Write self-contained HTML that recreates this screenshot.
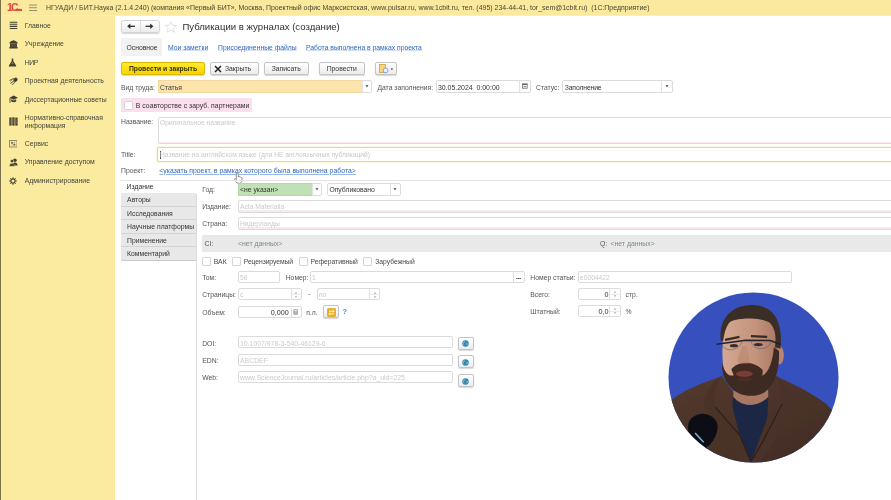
<!DOCTYPE html>
<html lang="ru">
<head>
<meta charset="utf-8">
<title>Публикации в журналах (создание)</title>
<style>
*{box-sizing:border-box;margin:0;padding:0}
html,body{width:891px;height:500px;overflow:hidden;background:#fff}
body{font-family:"Liberation Sans",sans-serif;font-size:7.5px;color:#333;position:relative}
.abs{position:absolute;white-space:nowrap}
#titlebar{left:0;top:0;width:891px;height:16px;background:#fbea9d;border-bottom:1.500px solid #fcf0ac}
#sidebar{left:0;top:16px;width:115px;height:484px;background:#fbeb9f}
#edge{left:0;top:0;width:1px;height:500px;background:#77724a}
.sb{left:24.700px;font-size:6.850px;color:#45443c;line-height:8.4px}
.t{font-size:6.800px;color:#4a4a4a;line-height:9px}
.lbl{font-size:6.800px;color:#555;line-height:9px}
.ph{font-size:6.700px;color:#cacaca;line-height:9px}
.link{font-size:6.8px;color:#2f66ba;line-height:9px;text-decoration:underline;text-decoration-color:#9ab6e4;text-decoration-thickness:0.700px;text-underline-offset:0.800px}
.fld{border:1px solid #dbdbdb;background:#fff;border-radius:2px}
.btn{border:1px solid #c4c4c4;border-radius:2px;background:linear-gradient(#fff,#ececec);font-size:6.8px;color:#333;text-align:center;line-height:12px;box-shadow:0 1px 1px rgba(0,0,0,.16)}
.cb{width:8.500px;height:8.400px;margin-left:-0.300px;border-radius:1.500px;border:1px solid #d6d6d6;background:#fff;border-radius:1px}
.ltab{left:121px;width:75.3px;height:13.5px;background:#e8e8e8;border-bottom:1px solid #d4d4d4;font-size:6.8px;color:#333;line-height:14.200px;padding-left:6.100px;overflow:hidden}
</style>
</head>
<body>
<div id="wrap" style="position:absolute;left:0;top:0;width:891px;height:500px;will-change:transform;overflow:hidden">
<div class="abs" id="titlebar"></div>
<div class="abs" id="sidebar"></div>
<div class="abs" id="edge"></div>

<!-- title bar content -->
<svg class="abs" style="left:7px;top:3px" width="16" height="10" viewBox="0 0 16 10">
  <text x="0" y="7.900" font-family="Liberation Sans, sans-serif" font-size="10.500" font-weight="bold" fill="#dc4a3c" letter-spacing="-1.800">1С</text>
  <rect x="8.600" y="5.900" width="6.400" height="2" fill="#dc4a3c"/>
</svg>
<svg class="abs" style="left:29px;top:4px" width="9" height="8" viewBox="0 0 9 8">
  <rect x="0" y="0.6" width="8" height="0.9" fill="#8a8670"/><rect x="0" y="3.3" width="8" height="0.9" fill="#8a8670"/><rect x="0" y="6" width="8" height="0.9" fill="#8a8670"/>
</svg>
<div class="abs" id="ttl" style="left:46px;top:3.3px;font-size:6.96px;color:#4a4634;line-height:9px">НГУАДИ / БИТ.Наука (2.1.4.240) (компания «Первый БИТ», Москва, Проектный офис Марксистская, www.pulsar.ru, www.1cbit.ru, тел. (495) 234-44-41, tor_sem@1cbit.ru)&nbsp; (1С:Предприятие)</div>

<!-- sidebar items -->
<div class="abs sb" style="top:21.5px">Главное</div>
<div class="abs sb" style="top:40.0px">Учреждение</div>
<div class="abs sb" style="top:58.5px;letter-spacing:-0.400px">НИР</div>
<div class="abs sb" style="top:77.0px">Проектная деятельность</div>
<div class="abs sb" style="top:95.5px">Диссертационные советы</div>
<div class="abs sb" style="top:113.7px">Нормативно-справочная<br>информация</div>
<div class="abs sb" style="top:139.9px">Сервис</div>
<div class="abs sb" style="top:158.4px">Управление доступом</div>
<div class="abs sb" style="top:177.1px">Администрирование</div>

<!-- MAIN -->

<!-- header -->
<div class="abs btn" style="left:121px;top:20.300px;width:39px;height:12.300px;border-color:#d2d2d2;border-radius:2.500px"></div>
<div class="abs" style="left:140px;top:21.300px;width:1px;height:10.300px;background:#dedede"></div>
<svg class="abs" style="left:121px;top:20.300px" width="39" height="12.300" viewBox="0 0 39 12.300">
  <path d="M8 6.300 H14" stroke="#2e2e2e" stroke-width="1.300" fill="none"/><path d="M6.200 6.300 L9.400 3.600 V9 Z" fill="#2e2e2e"/>
  <path d="M24.600 6.300 H30.600" stroke="#2e2e2e" stroke-width="1.300" fill="none"/><path d="M32.400 6.300 L29.200 3.600 V9 Z" fill="#2e2e2e"/>
</svg>
<svg class="abs" style="left:164.400px;top:19.800px" width="13.600" height="13.600" viewBox="0 0 24 24">
  <path d="M12 2.500 L14.900 9.200 L22 9.800 L16.600 14.600 L18.200 21.600 L12 17.900 L5.800 21.600 L7.400 14.600 L2 9.800 L9.100 9.200 Z" fill="#fff" stroke="#d8d8d8" stroke-width="1.300"/>
</svg>
<div class="abs" id="h1" style="left:182.400px;top:19.800px;font-size:9.6px;color:#2f2f2f;line-height:13px">Публикации в журналах (создание)</div>

<!-- tabs -->
<div class="abs" style="left:121px;top:38px;width:41px;height:18px;background:#f2f2f2;border-radius:1px"></div>
<div class="abs t" id="tab1" style="left:126.5px;top:43px;color:#333">Основное</div>
<div class="abs link" id="tab2" style="text-decoration-color:#d3dff3;text-underline-offset:0.200px;left:168px;top:43px">Мои заметки</div>
<div class="abs link" id="tab3" style="text-decoration-color:#d3dff3;text-underline-offset:0.200px;left:218px;top:43px">Присоединенные файлы</div>
<div class="abs link" id="tab4" style="text-decoration-color:#d3dff3;text-underline-offset:0.200px;left:306px;top:43px">Работа выполнена в рамках проекта</div>

<!-- command bar -->
<div class="abs btn" id="b1" style="left:121px;top:62px;width:84px;height:12.5px;background:linear-gradient(#ffea30,#f6d400);border-color:#dcb900;font-weight:bold;color:#3a3000">Провести и закрыть</div>
<div class="abs btn" id="b2" style="left:209.5px;top:62px;width:49.500px;height:12.500px;padding-left:7.500px">Закрыть</div>
<svg class="abs" style="left:214px;top:64.5px" width="8" height="8" viewBox="0 0 8 8"><path d="M1 1 L7 7 M7 1 L1 7" stroke="#222" stroke-width="1.5" fill="none"/></svg>
<div class="abs btn" id="b3" style="left:264px;top:62px;width:44.5px;height:12.5px">Записать</div>
<div class="abs btn" id="b4" style="left:319px;top:62px;width:45.5px;height:12.5px">Провести</div>
<div class="abs btn" id="b5" style="left:375px;top:62px;width:22px;height:12.5px"></div>
<svg class="abs" style="left:378.5px;top:63.5px" width="16" height="10" viewBox="0 0 16 10">
  <rect x="0.5" y="0.5" width="6" height="8" fill="#f7d77a" stroke="#c9a23a" stroke-width="0.8"/>
  <circle cx="6.6" cy="6.4" r="2.4" fill="#eef3fb" stroke="#6f8fc9" stroke-width="0.8"/>
  <path d="M11.6 4.6 h2.6 l-1.3 1.6z" fill="#444"/>
</svg>


<!-- row: Вид труда -->
<div class="abs lbl" id="l_vid" style="left:121px;top:82.6px">Вид труда:</div>
<div class="abs fld" style="left:158px;top:80.400px;width:213.500px;height:12.300px"></div>
<div class="abs" style="left:158px;top:80.400px;width:203.500px;height:12.300px;background:#fde4ad;border:1px solid #f3d9a0;border-right:none;border-radius:1px 0 0 1px"></div>
<div class="abs t" style="left:160px;top:82.6px;color:#3a3a3a">Статья</div>
<div class="abs" style="left:361.500px;top:81.400px;width:1px;height:10.300px;background:#e6e6e6"></div>
<svg class="abs" style="left:364.500px;top:85px" width="4" height="3" viewBox="0 0 4 3"><path d="M0.500 0.300h3L2 2.300z" fill="#3c3c3c"/></svg>
<div class="abs lbl" id="l_date" style="left:377.4px;top:82.6px">Дата заполнения:</div>
<div class="abs fld" style="left:436px;top:80.200px;width:94.800px;height:12.600px"></div>
<div class="abs t" id="v_date" style="left:437.900px;top:82.600px;color:#333;white-space:pre;font-size:6.950px">30.05.2024  0:00:00</div>
<div class="abs" style="left:519px;top:81.200px;width:1px;height:10.600px;background:#e2e2e2"></div>
<svg class="abs" style="left:522.200px;top:83.300px" width="5.600" height="5.600" viewBox="0 0 6 6"><rect x="0.400" y="0.900" width="5.200" height="4.700" fill="#fff" stroke="#6a6a6a" stroke-width="0.800"/><rect x="0.400" y="0.900" width="5.200" height="1.300" fill="#6a6a6a"/><rect x="1.500" y="3.100" width="3" height="1.500" fill="#9a9a9a"/></svg>
<div class="abs lbl" id="l_stat" style="left:536px;top:82.6px">Статус:</div>
<div class="abs fld" style="left:562px;top:80.200px;width:111px;height:12.600px"></div>
<div class="abs t" style="left:564.700px;top:82.600px;color:#333;letter-spacing:-0.120px">Заполнение</div>
<div class="abs" style="left:661.200px;top:81.200px;width:1px;height:10.600px;background:#e2e2e2"></div>
<svg class="abs" style="left:665.200px;top:84.700px" width="4" height="3" viewBox="0 0 4 3"><path d="M0.500 0.300h3L2 2.300z" fill="#3c3c3c"/></svg>

<!-- checkbox row -->
<div class="abs" style="left:121px;top:97.6px;width:130.7px;height:14.4px;background:#fbdfee"></div>
<div class="abs cb" style="left:124.3px;top:101.4px"></div>
<div class="abs t" id="c_co" style="left:135.8px;top:101px;color:#333;letter-spacing:0.045px">В соавторстве с заруб. партнерами</div>

<!-- Название -->
<div class="abs lbl" style="left:121px;top:117px">Название:</div>
<div class="abs fld" style="left:158px;top:117.100px;width:740px;height:27px"></div>
<div class="abs" style="left:159px;top:141.500px;width:732px;height:1.500px;background:#fce8eb"></div>
<div class="abs ph" id="p_name" style="left:160px;top:117.9px">Оригинальное название</div>

<!-- Title -->
<div class="abs lbl" style="left:121px;top:150.3px">Title:</div>
<div class="abs fld" style="left:157.300px;top:147.200px;width:740px;height:14.600px;border-color:#f4da62;box-shadow:0 0 0 0.600px #fbefba"></div>
<div class="abs" style="left:159.600px;top:150.600px;width:0.800px;height:8.400px;background:#555"></div>
<div class="abs ph" id="p_title" style="left:160px;top:150.3px">Название на английском языке (для НЕ англоязычных публикаций)</div>

<!-- Проект -->
<div class="abs lbl" style="left:121px;top:166px">Проект:</div>
<div class="abs link" id="p_proj" style="left:159.300px;top:165.700px;letter-spacing:0.050px;text-decoration-thickness:0.700px;text-underline-offset:0.700px">&lt;указать проект, в рамках которого была выполнена работа&gt;</div>
<svg class="abs" style="left:234px;top:172px" width="10" height="12" viewBox="0 0 10 12"><path d="M3.2 0.8c.6 0 1 .4 1 1v3.3l.3-.5c.5-.3 1-.1 1.200.3.500-.300 1-.100 1.200.400.500-.2.900 0 1.100.5v2.600c0 1.500-1 2.800-2.600 2.800h-1.200c-1 0-1.600-.5-2.200-1.300l-1.500-2.400c-.3-.5.300-1.100.9-.7l.9.900v-6.900c0-.6.400-1 .9-1z" fill="#fff" stroke="#666" stroke-width="0.7"/></svg>

<!-- left tabs -->
<div class="abs" style="left:121px;top:179.700px;width:770px;height:1px;background:#e4e4e4"></div>
<div class="abs" style="left:196px;top:180px;width:1px;height:320px;background:#dcdcdc"></div>
<div class="abs" style="left:120.500px;top:180px;width:1px;height:81px;background:#e0e0e0"></div>
<div class="abs ltab" style="top:180.500px;height:13px;background:#fff;border-bottom:none;line-height:12.600px;width:75.500px;padding-left:5.600px">Издание</div>
<div class="abs ltab" style="top:193.400px">Авторы</div>
<div class="abs ltab" style="top:206.900px">Исследования</div>
<div class="abs ltab" style="top:220.400px">Научные платформы</div>
<div class="abs ltab" style="top:233.800px">Применение</div>
<div class="abs ltab" style="top:247.200px;height:13.800px;border-radius:0 0 0 2px;border-bottom:1px solid #c9c9c9">Комментарий</div>

<!-- Год -->
<div class="abs lbl" style="left:202.2px;top:185.2px">Год:</div>
<div class="abs fld" style="left:238px;top:183.200px;width:83.800px;height:12.500px"></div>
<div class="abs" style="left:238px;top:183.200px;width:73.500px;height:12.500px;background:#c0e1b5;border:1px solid #b4d6a9;border-right:none;border-radius:1px 0 0 1px"></div>
<div class="abs t" style="left:240px;top:185.2px;color:#333">&lt;не указан&gt;</div>
<div class="abs" style="left:311.500px;top:184.200px;width:1px;height:10.500px;background:#e2e2e2"></div>
<svg class="abs" style="left:314.600px;top:187.800px" width="4" height="3" viewBox="0 0 4 3"><path d="M0.500 0.300h3L2 2.300z" fill="#3c3c3c"/></svg>
<div class="abs fld" style="left:327px;top:183.200px;width:73.800px;height:12.500px"></div>
<div class="abs t" style="left:329.400px;top:185px;color:#333">Опубликовано</div>
<div class="abs" style="left:389.500px;top:184.200px;width:1px;height:10.500px;background:#e2e2e2"></div>
<svg class="abs" style="left:393.100px;top:187.800px" width="4" height="3" viewBox="0 0 4 3"><path d="M0.500 0.300h3L2 2.300z" fill="#3c3c3c"/></svg>

<!-- Издание / Страна -->
<div class="abs lbl" style="left:202.2px;top:202.1px">Издание:</div>
<div class="abs fld" style="left:238px;top:199.800px;width:660px;height:12.900px"></div>
<div class="abs" style="left:239px;top:210.200px;width:652px;height:1.500px;background:#fce8eb"></div>
<div class="abs ph" style="left:240px;top:202.1px">Acta Materialia</div>
<div class="abs lbl" style="left:202.2px;top:219.1px">Страна:</div>
<div class="abs fld" style="left:238px;top:216.800px;width:660px;height:12.900px"></div>
<div class="abs" style="left:239px;top:227.200px;width:652px;height:1.500px;background:#fce8eb"></div>
<div class="abs ph" style="left:240px;top:219.1px">Нидерланды</div>

<!-- CI row -->
<div class="abs" style="left:201.7px;top:234.6px;width:690px;height:17.4px;background:#e9e9e9"></div>
<div class="abs lbl" style="left:204.6px;top:239.3px">CI:</div>
<div class="abs t" style="left:238px;top:239.3px;color:#7b8b8a;font-size:6.9px">&lt;нет данных&gt;</div>
<div class="abs lbl" style="left:600px;top:239px">Q:</div>
<div class="abs t" style="left:610.4px;top:239px;color:#7b8b8a;font-size:6.9px">&lt;нет данных&gt;</div>

<!-- checkboxes -->
<div class="abs cb" style="left:202.5px;top:257.3px"></div>
<div class="abs t" style="left:213.8px;top:256.8px">ВАК</div>
<div class="abs cb" style="left:232.6px;top:257.3px"></div>
<div class="abs t" id="c_rec" style="left:243.800px;top:256.800px;letter-spacing:-0.100px">Рецензируемый</div>
<div class="abs cb" style="left:299.7px;top:257.3px"></div>
<div class="abs t" id="c_ref" style="left:310.600px;top:256.800px;letter-spacing:-0.050px">Реферативный</div>
<div class="abs cb" style="left:363.4px;top:257.3px"></div>
<div class="abs t" id="c_zar" style="left:375.2px;top:256.8px">Зарубежный</div>

<!-- Том / Номер -->
<div class="abs lbl" style="left:202.2px;top:272.6px">Том:</div>
<div class="abs fld" style="left:238px;top:271.0px;width:42.4px;height:12.0px"></div>
<div class="abs ph" style="left:240px;top:272.6px">58</div>
<div class="abs lbl" style="left:285.7px;top:272.6px">Номер:</div>
<div class="abs fld" style="left:309.8px;top:271.0px;width:214.8px;height:12.0px"></div>
<div class="abs ph" style="left:312px;top:272.6px">1</div>
<div class="abs" style="left:513.4px;top:272.3px;width:1px;height:9.4px;background:#ddd"></div>
<div class="abs t" style="left:516px;top:272px;font-size:7px;color:#222;letter-spacing:-0.300px;font-weight:bold">...</div>
<div class="abs lbl" id="l_ns" style="left:530.3px;top:272.6px">Номер статьи:</div>
<div class="abs fld" style="left:578px;top:271.0px;width:214.4px;height:12.0px"></div>
<div class="abs ph" style="left:580px;top:272.6px">e0004422</div>

<!-- Страницы -->
<div class="abs lbl" style="left:202.2px;top:289.7px">Страницы:</div>
<div class="abs fld" style="left:238px;top:288.1px;width:63.5px;height:12.0px"></div>
<div class="abs ph" style="left:240px;top:289.7px">с</div>
<div class="abs" style="left:290.500px;top:289.100px;width:1px;height:10px;background:#e2e2e2"></div><div class="abs" style="left:291.500px;top:293.700px;width:9px;height:1px;background:#ececec"></div>
<svg class="abs" style="left:294px;top:290.5px" width="4" height="8" viewBox="0 0 4 8"><path d="M0.900 2.600 L2 1.300 L3.100 2.600z M0.900 5.400 L2 6.700 L3.100 5.400z" fill="#777"/></svg>
<div class="abs lbl" style="left:308.3px;top:289.4px">-</div>
<div class="abs fld" style="left:316.8px;top:288.1px;width:63.7px;height:12.0px"></div>
<div class="abs ph" style="left:319px;top:289.7px">по</div>
<div class="abs" style="left:369.400px;top:289.100px;width:1px;height:10px;background:#e2e2e2"></div><div class="abs" style="left:370.400px;top:293.700px;width:9px;height:1px;background:#ececec"></div>
<svg class="abs" style="left:373px;top:290.5px" width="4" height="8" viewBox="0 0 4 8"><path d="M0.900 2.600 L2 1.300 L3.100 2.600z M0.900 5.400 L2 6.700 L3.100 5.400z" fill="#777"/></svg>
<div class="abs lbl" style="left:530.3px;top:290.2px">Всего:</div>
<div class="abs fld" style="left:578px;top:288.200px;width:42.800px;height:12.100px"></div>
<div class="abs t" style="left:580px;top:290px;width:28.4px;text-align:right;font-size:7.2px;color:#333">0</div>
<div class="abs" style="left:609.200px;top:289.200px;width:1px;height:10.100px;background:#e2e2e2"></div><div class="abs" style="left:610.200px;top:293.800px;width:9.600px;height:1px;background:#ececec"></div>
<svg class="abs" style="left:612.800px;top:290.300px" width="4" height="8" viewBox="0 0 4 8"><path d="M0.900 2.600 L2 1.300 L3.100 2.600z M0.900 5.400 L2 6.700 L3.100 5.400z" fill="#777"/></svg>
<div class="abs lbl" style="left:625.6px;top:290.2px">стр.</div>

<!-- Объем -->
<div class="abs lbl" style="left:202.2px;top:308px">Объем:</div>
<div class="abs fld" style="left:238px;top:306.2px;width:63.5px;height:12.0px"></div>
<div class="abs t" style="left:240px;top:308px;width:48.8px;text-align:right;font-size:7.2px;color:#333">0,000</div>
<div class="abs" style="left:290.5px;top:307.5px;width:1px;height:9.8px;background:#ddd"></div>
<svg class="abs" style="left:292.800px;top:309px" width="5.500" height="5.800" viewBox="0 0 6 7"><rect x="0.5" y="0.5" width="5" height="6" rx="0.6" fill="#b5b5b5" stroke="#8a8a8a" stroke-width="0.600"/><rect x="1.300" y="1.300" width="3.400" height="1.200" fill="#ededed"/></svg>
<div class="abs lbl" style="left:306.2px;top:308px">п.л.</div>
<div class="abs btn" style="left:323.4px;top:305.4px;width:15.4px;height:13px"></div>
<svg class="abs" style="left:326.6px;top:307.6px" width="9" height="9" viewBox="0 0 9 9"><rect x="0.400" y="0.400" width="8.200" height="8.200" rx="1.200" fill="#ecae28" stroke="#dc9c14" stroke-width="0.700"/><path d="M2 3.200h5M2 5.800h5" stroke="#fff" stroke-width="0.900"/><path d="M5.800 2.100L7.200 3.200L5.800 4.300M3.200 4.700L1.800 5.800L3.200 6.900" stroke="#fff" stroke-width="0.700" fill="none"/></svg>
<div class="abs t" style="left:342.400px;top:307.200px;color:#3f90d0;font-size:7.400px;font-weight:bold">?</div>
<div class="abs lbl" style="left:530.3px;top:307px">Штатный:</div>
<div class="abs fld" style="left:578px;top:305.300px;width:42.800px;height:12.200px"></div>
<div class="abs t" style="left:580px;top:307px;width:28.4px;text-align:right;font-size:7.2px;color:#333">0,0</div>
<div class="abs" style="left:609.200px;top:306.300px;width:1px;height:10.200px;background:#e2e2e2"></div><div class="abs" style="left:610.200px;top:311px;width:9.600px;height:1px;background:#ececec"></div>
<svg class="abs" style="left:612.800px;top:307.400px" width="4" height="8" viewBox="0 0 4 8"><path d="M0.900 2.600 L2 1.300 L3.100 2.600z M0.900 5.400 L2 6.700 L3.100 5.400z" fill="#777"/></svg>
<div class="abs lbl" style="left:625.6px;top:307px">%</div>

<!-- DOI / EDN / Web -->
<div class="abs lbl" style="left:202.2px;top:338.6px">DOI:</div>
<div class="abs fld" style="left:238px;top:336.300px;width:214.600px;height:12.200px"></div>
<div class="abs ph" id="p_doi" style="left:240px;top:338.6px;font-size:6.88px">10.1007/978-3-540-46129-6</div>
<div class="abs btn globe" style="left:457.600px;top:336.800px;width:16.200px;height:13px"></div>
<div class="abs lbl" style="left:202.2px;top:355.5px">EDN:</div>
<div class="abs fld" style="left:238px;top:353.500px;width:214.600px;height:12px"></div>
<div class="abs ph" style="left:240px;top:355.5px;font-size:6.88px">ABCDEF</div>
<div class="abs btn globe" style="left:457.600px;top:355.400px;width:16.200px;height:13px"></div>
<div class="abs lbl" style="left:202.2px;top:372.700px">Web:</div>
<div class="abs fld" style="left:238px;top:371px;width:214.600px;height:11.800px"></div>
<div class="abs ph" id="p_web" style="left:240px;top:372.700px;font-size:6.88px">www.ScienceJournal.ru/articles/article.php?a_uid=225</div>
<div class="abs btn globe" style="left:457.600px;top:374.200px;width:16.200px;height:13px"></div>
<svg class="abs" style="left:462.2px;top:339.8px" width="7" height="7" viewBox="0 0 7 7"><circle cx="3.5" cy="3.5" r="3.2" fill="#2f7fd6"/><path d="M1.6 1.400c1-.5 1.800 0 1.400.9s-1.400.7-1.300 1.700c.2.700.9 1.100.7 1.900-.8-.5-1.700-1.500-1.700-2.500 0-.9.400-1.600.9-2zM4.600 2.800c.7-.1 1.600.5 1.500 1.300-.2.800-.9 1.400-1.500 1.100-.5-.4-.600-1.900 0-2.400z" fill="#6fc46a"/></svg>
<svg class="abs" style="left:462.2px;top:358.6px" width="7" height="7" viewBox="0 0 7 7"><circle cx="3.5" cy="3.5" r="3.2" fill="#2f7fd6"/><path d="M1.6 1.400c1-.5 1.800 0 1.400.9s-1.400.7-1.300 1.700c.2.700.9 1.100.7 1.900-.8-.5-1.700-1.500-1.700-2.500 0-.9.400-1.600.9-2zM4.600 2.800c.7-.1 1.600.5 1.500 1.300-.2.800-.9 1.400-1.500 1.100-.5-.4-.600-1.900 0-2.400z" fill="#6fc46a"/></svg>
<svg class="abs" style="left:462.2px;top:377.900px" width="7" height="7" viewBox="0 0 7 7"><circle cx="3.5" cy="3.5" r="3.2" fill="#2f7fd6"/><path d="M1.6 1.400c1-.5 1.800 0 1.400.9s-1.400.7-1.300 1.700c.2.700.9 1.100.7 1.900-.8-.5-1.700-1.500-1.700-2.500 0-.9.400-1.600.9-2zM4.600 2.800c.7-.1 1.600.5 1.500 1.300-.2.800-.9 1.400-1.500 1.100-.5-.4-.600-1.900 0-2.400z" fill="#6fc46a"/></svg>


<!-- presenter bubble -->
<svg class="abs" style="left:660px;top:285px" width="190" height="185" viewBox="0 0 514 500">
  <defs>
    <clipPath id="cc"><circle cx="253" cy="250" r="230"/></clipPath>
    <filter id="bl" x="-5%" y="-5%" width="110%" height="110%"><feGaussianBlur stdDeviation="1.600"/></filter>
    <linearGradient id="jk" x1="0" y1="0" x2="1" y2="1"><stop offset="0" stop-color="#553a2f"/><stop offset="1" stop-color="#3f2a22"/></linearGradient>
    <linearGradient id="sk" x1="0" y1="0" x2="1" y2="0"><stop offset="0" stop-color="#d3a892"/><stop offset="0.6" stop-color="#c4937c"/><stop offset="1" stop-color="#a87862"/></linearGradient>
  </defs>
  <g clip-path="url(#cc)">
    <rect x="0" y="0" width="514" height="500" fill="#3651bd"/>
    <g filter="url(#bl)">
    <!-- jacket -->
    <path d="M5 335 C 50 285, 110 268, 168 246 L 205 300 L 245 335 L 298 238 C 335 258, 395 280, 450 322 L 514 395 L 514 500 L 0 500 Z" fill="url(#jk)"/>
    <!-- shirt -->
    <path d="M197 300 C 215 330, 265 335, 293 300 L 290 360 L 246 478 L 214 400 L 196 330 Z" fill="#1d2745"/>
    <!-- neck -->
    <path d="M200 270 L 292 265 L 293 302 C 265 332, 220 330, 198 302 Z" fill="#a87862"/>
    <!-- lapels -->
    <path d="M168 246 C 150 270, 140 300, 150 330 L 215 405 L 246 478 L 238 500 L 200 440 L 120 330 C 120 290, 140 262, 168 246 Z" fill="#4a3128"/>
    <path d="M298 238 C 330 262, 340 290, 330 322 L 280 420 L 246 478 L 256 500 L 300 440 L 362 330 C 362 290, 335 258, 298 238 Z" fill="#48302a"/>
    <path d="M150 330 L 215 405 L 246 478 M330 322 L 280 420 L 246 478" stroke="#2e1e19" stroke-width="3" fill="none"/>
    <!-- ear -->
    <ellipse cx="323" cy="190" rx="12" ry="25" fill="#b8866f"/>
    <!-- face -->
    <path d="M170 150 C 168 90, 215 68, 250 70 C 295 72, 322 105, 318 170 C 316 230, 300 275, 262 292 C 225 302, 190 280, 176 240 C 168 215, 168 180, 170 150 Z" fill="url(#sk)"/>
    <!-- hair -->
    <path d="M165 152 C 156 92, 196 52, 250 54 C 306 54, 334 98, 326 172 L 311 168 C 316 135, 310 115, 296 101 C 270 87, 215 87, 190 99 C 179 109, 174 130, 171 150 Z" fill="#3b2e27"/>
    <!-- beard -->
    <path d="M168 212 C 176 238, 186 248, 200 244 C 216 222, 258 222, 276 246 C 296 236, 306 200, 308 168 L 322 178 C 324 232, 310 272, 280 292 C 250 306, 214 300, 194 280 C 176 260, 166 238, 168 212 Z" fill="#3e2a21"/>
    <path d="M193 228 C 212 204, 252 204, 278 230 L 277 248 C 256 226, 216 226, 200 246 Z" fill="#402b22"/>
    <ellipse cx="228" cy="240" rx="23" ry="8" fill="#7a3c35"/>
    <ellipse cx="230" cy="255" rx="20" ry="6" fill="#4a2f26"/>
    <!-- nose shade -->
    <path d="M222 165 C 215 190, 205 205, 215 212 L 240 212 C 246 200, 236 180, 234 165 Z" fill="#b98972" opacity="0.7"/>
    <!-- eyes / brows -->
    <path d="M176 148 L 215 140 M246 138 L 290 140" stroke="#3a2a22" stroke-width="6" fill="none"/>
    <ellipse cx="200" cy="164" rx="11" ry="4.500" fill="#3a2a25"/>
    <ellipse cx="266" cy="161" rx="12" ry="4.500" fill="#3a2a25"/>
    <!-- glasses -->
    <path d="M153 160 L 232 149 L 298 150 L 326 160" stroke="#22222e" stroke-width="4" fill="none"/>
    <path d="M168 160 C 172 182, 215 180, 222 152 M246 150 C 250 180, 296 178, 300 152" stroke="#55556a" stroke-width="1.500" fill="none"/>
    <!-- mic -->
    <path d="M78 370 C 95 340, 140 340, 155 375 C 160 400, 140 440, 110 445 C 85 430, 70 400, 78 370 Z" fill="#0f0f12"/>
    <path d="M95 400 L 118 425" stroke="#7fb4d8" stroke-width="4"/>
    </g>
  </g>
</svg>


<!-- sidebar icons -->
<svg class="abs" style="left:8.5px;top:21px" width="9" height="9" viewBox="0 0 9 9"><path d="M0.700 1.200h7.600M0.700 3.300h7.600M0.700 5.400h7.600M0.700 7.500h7.600" stroke="#45412f" stroke-width="1.100"/></svg>
<svg class="abs" style="left:8.500px;top:39.600px" width="9" height="9" viewBox="0 0 9 9"><path d="M4.500 0.300C6.500 0.900 7.800 1.700 8.600 2.600V3.400H0.400V2.600C1.200 1.700 2.500 0.900 4.500 0.300Z" fill="#45412f"/><path d="M1.100 3.400h6.800v3.700h-6.800z" fill="#5d5843"/><path d="M1.100 3.700h1.500v3.200h-1.500zM3.750 3.700h1.500v3.200h-1.500zM6.400 3.700h1.500v3.200h-1.500z" fill="#45412f"/><path d="M0.400 7.100h8.200v1.400h-8.200z" fill="#45412f"/></svg>
<svg class="abs" style="left:8.100px;top:57.800px" width="9" height="9" viewBox="0 0 9 9"><path d="M3.700 0.400h1.600v2.600l2.800 4.400c.4.600 0 1.200-.7 1.200h-5.800c-.7 0-1.100-.6-.7-1.200l2.800-4.400z" fill="#45412f"/><path d="M3.100 5.600h2.800" stroke="#8a8460" stroke-width="0.600"/><circle cx="4.500" cy="4.300" r="0.500" fill="#a39c70"/></svg>
<svg class="abs" style="left:8.500px;top:76.500px" width="9" height="9" viewBox="0 0 9 9"><ellipse cx="6.500" cy="2.700" rx="2.100" ry="1.900" transform="rotate(-35 6.500 2.700)" fill="#45412f"/><path d="M4.800 1.500L0.800 3.300M5.400 3.300L1.600 6.200M6.700 4.300L3.400 7.800" stroke="#45412f" stroke-width="0.800" stroke-linecap="round"/><path d="M3.600 2.600L1.200 4.600M4.600 4.400L2.600 6.800" stroke="#6b6548" stroke-width="0.500"/></svg>
<svg class="abs" style="left:8.500px;top:94.800px" width="9" height="9" viewBox="0 0 9 9"><path d="M4.700 0.600L8.900 2.700L4.700 4.800L0.500 2.700Z" fill="#45412f"/><path d="M2.200 4.200v2.200c1.500 1 3.500 1 5 0v-2.200l-2.500 1.300z" fill="#45412f"/><path d="M1 3v4.800" stroke="#45412f" stroke-width="0.900"/></svg>
<svg class="abs" style="left:8.500px;top:116.800px" width="9" height="9" viewBox="0 0 9 9"><rect x="0.300" y="0.500" width="2.300" height="8.100" fill="#45412f"/><rect x="3.300" y="0.300" width="2.300" height="8.300" fill="#45412f"/><rect x="6.300" y="0.600" width="2.300" height="8" fill="#45412f"/><path d="M1.450 2v5M4.450 1.800v5.400M7.450 2.200v4.800" stroke="#7a7455" stroke-width="0.500"/></svg>
<svg class="abs" style="left:8.800px;top:140.200px" width="8.500" height="7.500" viewBox="0 0 8.500 7.500"><rect x="0.500" y="0.500" width="7.500" height="6.500" fill="none" stroke="#8c8868" stroke-width="0.900"/><path d="M2.500 2.200h1.200v1.200h-1.200zM4.800 4h1.200v1.200h-1.200zM2.600 5.200h1M5 2.400h1" stroke="#6f6b50" stroke-width="0.700" fill="#6f6b50"/></svg>
<svg class="abs" style="left:8.500px;top:157.600px" width="9" height="9" viewBox="0 0 9 9"><circle cx="5.900" cy="2.200" r="1.800" fill="#45412f"/><path d="M3.300 7.400c0-2 1.100-3 2.600-3s2.700 1 2.700 3z" fill="#45412f"/><circle cx="3" cy="3" r="1.600" fill="#45412f" stroke="#fbeb9f" stroke-width="0.400"/><path d="M0.300 8.300c0-2 1.100-3 2.700-3s2.700 1 2.700 3z" fill="#45412f" stroke="#fbeb9f" stroke-width="0.400"/></svg>
<svg class="abs" style="left:9.300px;top:177px" width="8" height="8" viewBox="0 0 8 8"><circle cx="4" cy="4" r="2.100" fill="none" stroke="#45412f" stroke-width="1.100"/><path d="M4 0.200v1.500M4 6.300v1.500M0.200 4h1.500M6.300 4h1.500M1.300 1.300l1.100 1.100M5.600 5.600l1.100 1.100M6.700 1.300l-1.100 1.100M2.400 5.600l-1.100 1.100" stroke="#45412f" stroke-width="1"/></svg>

<div id="main6"></div>
</div>
</body>
</html>
